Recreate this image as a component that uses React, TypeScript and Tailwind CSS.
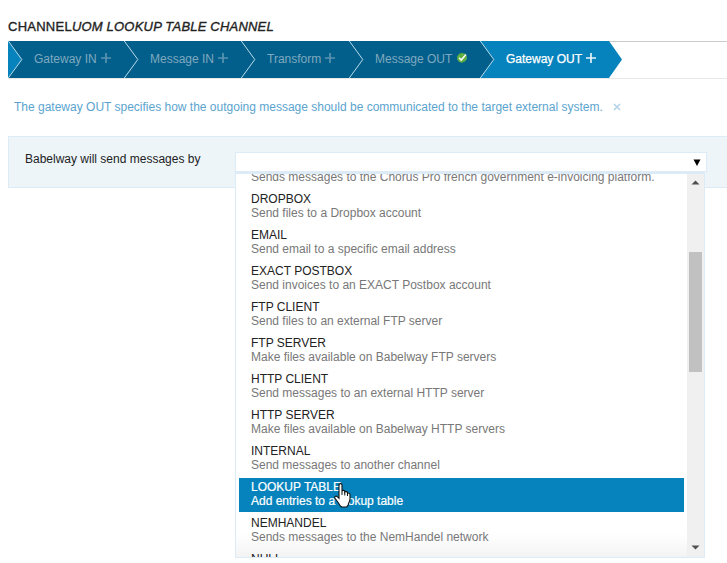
import React from "react";

type State = "todo" | "done" | "active";

const steps: { label: string; width: string; state: State }[] = [
  { label: "Gateway IN", width: "w-[116px]", state: "todo" },
  { label: "Message IN", width: "w-[117px]", state: "todo" },
  { label: "Transform", width: "w-[108px]", state: "todo" },
  { label: "Message OUT", width: "w-[131px]", state: "done" },
  { label: "Gateway OUT", width: "w-[129px]", state: "active" },
];

const options: [string, string][] = [
  ["CHORUS PRO", "Sends messages to the Chorus Pro french government e-invoicing platform."],
  ["DROPBOX", "Send files to a Dropbox account"],
  ["EMAIL", "Send email to a specific email address"],
  ["EXACT POSTBOX", "Send invoices to an EXACT Postbox account"],
  ["FTP CLIENT", "Send files to an external FTP server"],
  ["FTP SERVER", "Make files available on Babelway FTP servers"],
  ["HTTP CLIENT", "Send messages to an external HTTP server"],
  ["HTTP SERVER", "Make files available on Babelway HTTP servers"],
  ["INTERNAL", "Send messages to another channel"],
  ["LOOKUP TABLE", "Add entries to a lookup table"],
  ["NEMHANDEL", "Sends messages to the NemHandel network"],
  ["NULL", "Discard messages"],
];

function Chevron({ left }: { left: string }) {
  return (
    <svg width="15" height="37" className="shrink-0" viewBox="0 0 15 37">
      <path d="M0 0 L14 18.5 L0 37Z" fill={left} />
      <path d="M0.3 0 L13.8 18.5 L0.3 37" fill="none" stroke="#b9dcec" strokeWidth="1" />
    </svg>
  );
}

function StepIcon({ state }: { state: State }) {
  if (state === "done") {
    return (
      <svg width="12" height="12" viewBox="0 0 12 12" className="mb-[3px] ml-[4px]">
        <path
          d="M6 0.8l1.4.7 1.6 0 .7 1.4 1.2 1-.2 1.6.4 1.5-1.2 1.1-.8 1.4-1.6.2L6 11l-1.5-.8-1.6-.1-.7-1.5L1 7.5l.3-1.6-.3-1.6L2.2 3.2 2.9 1.7l1.6-.1Z"
          fill="#5fb040"
        />
        <path d="M3 5.8l2.200 2.300L10 2.400" fill="none" stroke="#fff" strokeWidth="1.500" />
      </svg>
    );
  }
  return (
    <svg width="10" height="10" viewBox="0 0 10 10" className="mb-[3px] ml-[4px]">
      <path d="M5 0V10M0 5H10" stroke={state === "active" ? "#e3f2f9" : "#5a94b1"} strokeWidth="1.700" />
    </svg>
  );
}

function Steps() {
  return (
    <div className="ml-2 flex h-[38px] border-t border-b border-t-[#ccc] border-b-[#e8e8e8]">
      <div className="-mt-px flex h-[37px]">
        {steps.map((s, i) => (
          <div
            key={s.label}
            className={`flex shrink-0 items-center ${s.width} ${s.state === "active" ? "bg-[#0683bd] text-white [-webkit-text-stroke:0.25px_#fff]" : "bg-[#025f8b] text-[#7fa9bf]"}`}
          >
            <Chevron left={i === 0 ? "#0683bd" : "#025f8b"} />
            <span className="mb-[2px] ml-[11px] whitespace-nowrap">{s.label}</span>
            <StepIcon state={s.state} />
          </div>
        ))}
        <svg width="14" height="37" viewBox="0 0 14 37" className="shrink-0">
          <path d="M0 0L13 18.500L0 37Z" fill="#0683bd" />
        </svg>
      </div>
    </div>
  );
}

function Dropdown() {
  return (
    <div className="absolute top-[19px] -left-px flex h-[386px] w-[470px] border border-t-2 border-[#dcebf5] bg-white">
      <div className="flex-1 overflow-hidden bg-[linear-gradient(to_bottom,#fff_0,#fff_360px,#f2f2f2_385px)] pr-[3px] pl-[3px]">
        <div className="-mt-[20px]">
          {options.map(([name, text]) => {
            const on = name === "LOOKUP TABLE";
            return (
              <div
                key={name}
                className={`mb-[2px] h-[34px] pt-[2px] pl-3 leading-[14px] whitespace-nowrap ${on ? "bg-[#0683bd] text-white [-webkit-text-stroke:0.2px_#fff]" : "text-[#222]"}`}
              >
                <div>{name}</div>
                <div className={on ? "text-white" : "text-[#787878]"}>{text}</div>
              </div>
            );
          })}
        </div>
      </div>
      <div className="flex w-[17px] flex-col items-center bg-[#f0f0f0]">
        <svg width="9" height="5" viewBox="0 0 9 5" className="mt-[6px]">
          <path d="M0.5 4.5L4.5 0.5L8.5 4.5Z" fill="#505050" />
        </svg>
        <div className="mt-[67px] h-[120px] w-[13px] bg-[#c1c1c1]" />
        <svg width="9" height="5" viewBox="0 0 9 5" className="mt-auto mb-[7px]">
          <path d="M0.5 0.5L4.5 4.5L8.5 0.5Z" fill="#505050" />
        </svg>
      </div>
    </div>
  );
}

export default function App() {
  return (
    <div className="relative h-[563px] w-[727px] overflow-hidden bg-white font-['Liberation_Sans',Arial,sans-serif] text-[12px] leading-[14px]">
      <h1 className="flex h-[41px] items-start pt-[19px] pl-2 text-[13px] leading-[16px] whitespace-nowrap text-[#222] [-webkit-text-stroke:0.35px_#222]">
        <span className="tracking-[0.25px]">CHANNEL</span>
        <em className="tracking-[0.2px]">UOM LOOKUP TABLE CHANNEL</em>
      </h1>
      <Steps />
      <div className="flex h-[57px] items-start pt-[21px] pl-[14px] whitespace-nowrap text-[#5ba4cf]">
        <span>The gateway OUT specifies how the outgoing message should be communicated to the target external system.</span>
        <svg width="8" height="8" viewBox="0 0 8 8" className="mt-[3px] ml-[10px]">
          <path d="M1 1L7 7M7 1L1 7" stroke="#b5d3e8" strokeWidth="1.600" />
        </svg>
      </div>
      <div className="ml-2 flex h-[52px] border border-r-0 border-[#dcebf5] bg-[#edf5f9] pl-4">
        <label className="w-[210px] pt-[15px] text-[#222]">Babelway will send messages by</label>
        <div className="relative mt-[15px] flex h-[20px] w-[472px] items-center justify-end border border-[#dcebf5] bg-white pr-[5px]">
          <svg width="8" height="7" viewBox="0 0 8 7">
            <path d="M0.5 0.5H7.5L4 7Z" fill="#000" />
          </svg>
          <Dropdown />
        </div>
      </div>
      <svg width="18" height="25" viewBox="0 0 18 25" className="absolute top-[483px] left-[334px]">
        <path
          d="M5 2c0-1.900 3-1.900 3 0V8c.4-1 2.700-.8 2.800.6v.5c.5-.9 2.600-.6 2.700.7v.6c.6-.7 2.500-.3 2.500 1.100V16c0 2.500-1.800 3.700-1.800 6L12.500 24H8C6 23.600 5.500 21.500 4.300 19.800L1 15.200c-.9-1.600.8-2.800 2.200-1.600L5 15.300Z"
          fill="#fff"
          stroke="#111"
          strokeWidth="1.100"
        />
        <path d="M8 8v4M10.800 9v3.500M13.500 10v3" stroke="#111" />
      </svg>
    </div>
  );
}
